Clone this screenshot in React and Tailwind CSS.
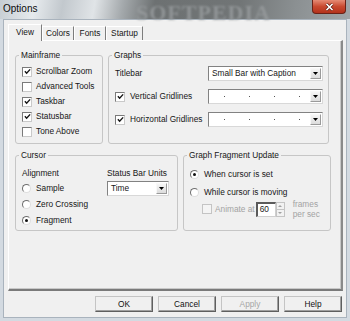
import React from "react";

function CheckBox({ checked, disabled }) {
  return (
    <span
      className={
        "flex h-[10px] w-[10px] shrink-0 items-center justify-center border " +
        (disabled
          ? "border-[#c4c4c4] bg-[#f4f4f4]"
          : "border-t-[#7a7a7a] border-l-[#7a7a7a] border-r-[#c9c9c9] border-b-[#c9c9c9] bg-white")
      }
    >
      {checked && (
        <svg viewBox="0 0 8 8" className="h-[7px] w-[7px]">
          <path d="M1 3.8 L3 6 L7 1.6" stroke="#151515" strokeWidth="1.6" fill="none" />
        </svg>
      )}
    </span>
  );
}

function Radio({ on }) {
  return (
    <span className="flex h-[9px] w-[9px] shrink-0 items-center justify-center rounded-full border border-t-[#6f6f6f] border-l-[#6f6f6f] border-r-[#dedede] border-b-[#dedede] bg-white">
      {on && <span className="h-[3px] w-[3px] rounded-full bg-[#111]" />}
    </span>
  );
}

function Arrow() {
  return (
    <span className="my-[1px] mr-[1px] flex w-[11px] items-center justify-center border border-t-[#f8f8f8] border-l-[#f8f8f8] border-r-[#9a9a9a] border-b-[#9a9a9a] bg-[linear-gradient(#f5f5f5,#dcdcdc)]">
      <svg viewBox="0 0 5 3" className="h-[3px] w-[5px]">
        <path d="M0 0 H5 L2.5 3 Z" fill="#000" />
      </svg>
    </span>
  );
}

function Dropdown({ width, children }) {
  return (
    <div
      className={
        "flex h-[15px] shrink-0 border border-t-[#828282] border-l-[#828282] border-r-[#d8d8d8] border-b-[#d8d8d8] bg-white " +
        width
      }
    >
      <div className="flex flex-1 items-center pl-[3px]">{children}</div>
      <Arrow />
    </div>
  );
}

function Dots() {
  return (
    <div className="flex items-center gap-[24px] pl-[12px]">
      <span className="h-[1px] w-[1px] bg-[#555]" />
      <span className="h-[1px] w-[1px] bg-[#555]" />
      <span className="h-[1px] w-[1px] bg-[#555]" />
      <span className="h-[1px] w-[1px] bg-[#555]" />
    </div>
  );
}

function Group({ title, className, children }) {
  return (
    <fieldset className={"shrink-0 rounded-[3px] border border-[#c6c6c6] " + className}>
      <legend className="ml-[3px] px-[2px] leading-[10px]">{title}</legend>
      {children}
    </fieldset>
  );
}

function Button({ children, disabled }) {
  return (
    <button
      className={
        "flex h-[16px] w-[58px] items-center justify-center border border-t-[#c4c4c4] border-l-[#c4c4c4] border-r-[#5f5f5f] border-b-[#5f5f5f] bg-[#f0f0f0] shadow-[inset_-1px_-1px_0_#a0a0a0] " +
        (disabled ? "text-[#a6a6a6]" : "text-[#111]")
      }
    >
      {children}
    </button>
  );
}

export default function App() {
  const mainframe = [
    ["Scrollbar Zoom", true],
    ["Advanced Tools", false],
    ["Taskbar", true],
    ["Statusbar", true],
    ["Tone Above", false],
  ];

  return (
    <div className="relative flex h-[321px] w-[350px] flex-col overflow-hidden bg-[#d3dae1] font-['Liberation_Sans',Arial,sans-serif] text-[8.3px] text-[#161616]">
      {/* Title bar */}
      <div className="relative flex h-[19px] shrink-0 items-start bg-[linear-gradient(100deg,#c6cdd3_0%,#e6eaed_10%,#c2c8cd_18%,#e0e4e7_27%,#a4a9ac_35%,#6d7172_44%,#717576_68%,#8b9092_84%,#a0a5a8_100%)]">
        <span className="pl-[3px] pt-[3px] text-[10px] leading-[12px] text-[#0c0c0c]">Options</span>
        <span className="absolute left-[136px] top-[-4px] font-['Liberation_Serif',serif] text-[22px] font-bold tracking-[1px] text-[#989c9e] opacity-80 blur-[1px]">
          SOFTPEDIA
        </span>
        <span className="relative ml-auto mr-[4px] flex h-[14px] w-[34px] items-center justify-center rounded-b-[4px] border border-t-0 border-[#6a2217] bg-[linear-gradient(#e58b75,#c94a30_50%,#b3321c)]">
          <svg viewBox="0 0 9 8" className="h-[8px] w-[9px]">
            <path d="M1.5 1 L7.5 7 M7.5 1 L1.5 7" stroke="#5a1a10" strokeWidth="3" />
            <path d="M1.5 1 L7.5 7 M7.5 1 L1.5 7" stroke="#fff" strokeWidth="1.7" />
          </svg>
        </span>
      </div>

      {/* Client area */}
      <div className="mx-[3px] flex h-[299px] shrink-0 flex-col border border-[#a9b3bd] bg-[#f0f0f0] pl-[4px] pt-[4px]">
        {/* Tabs */}
        <div className="flex h-[16px] items-end">
          <div className="relative z-10 -mb-[1px] flex h-[17px] w-[34px] items-center justify-center border border-b-0 border-t-white border-l-white border-r-[#7d7d7d] bg-[#f0f0f0] pb-[1px]">
            View
          </div>
          <div className="flex h-[14px] w-[32px] items-center justify-center border border-b-0 border-t-white border-l-white border-r-[#7d7d7d]">
            Colors
          </div>
          <div className="flex h-[14px] w-[32px] items-center justify-center border border-b-0 border-t-white border-l-white border-r-[#7d7d7d]">
            Fonts
          </div>
          <div className="flex h-[14px] w-[37px] items-center justify-center border border-b-0 border-t-white border-l-white border-r-[#7d7d7d]">
            Startup
          </div>
        </div>

        {/* Tab page */}
        <div className="flex h-[251px] w-[335px] flex-col border border-b-2 border-r-2 border-t-white border-l-white border-r-[#8a8a8a] border-b-[#7a7a7a] pl-[6px] pt-[9px] shadow-[inset_-1px_-1px_0_#c8c8c8]">
          <div className="flex gap-[5px]">
            <Group title="Mainframe" className="h-[94px] w-[88px]">
              <div className="flex flex-col pl-[6px] pt-[4px]">
                {mainframe.map(([label, on]) => (
                  <div key={label} className="flex h-[15px] items-center gap-[4px]">
                    <CheckBox checked={on} />
                    <span>{label}</span>
                  </div>
                ))}
              </div>
            </Group>

            <Group title="Graphs" className="h-[94px] w-[221px]">
              <div className="flex flex-col gap-[8px] pl-[6px] pr-[5px] pt-[6px]">
                <div className="flex h-[15px] items-center justify-between">
                  <span>Titlebar</span>
                  <Dropdown width="w-[115px]">Small Bar with Caption</Dropdown>
                </div>
                <div className="flex h-[15px] items-center justify-between">
                  <div className="flex items-center gap-[5px]">
                    <CheckBox checked />
                    <span>Vertical Gridlines</span>
                  </div>
                  <Dropdown width="w-[115px]">
                    <Dots />
                  </Dropdown>
                </div>
                <div className="flex h-[15px] items-center justify-between">
                  <div className="flex items-center gap-[5px]">
                    <CheckBox checked />
                    <span>Horizontal Gridlines</span>
                  </div>
                  <Dropdown width="w-[115px]">
                    <Dots />
                  </Dropdown>
                </div>
              </div>
            </Group>
          </div>

          <div className="mt-[6px] flex gap-[5px]">
            <Group title="Cursor" className="h-[81px] w-[163px]">
              <div className="flex pl-[6px] pt-[8px]">
                <div className="flex w-[85px] flex-col">
                  <span className="leading-[10px]">Alignment</span>
                  <div className="mt-[2px] flex flex-col">
                    <div className="flex h-[16px] items-center gap-[5px]">
                      <Radio />
                      <span>Sample</span>
                    </div>
                    <div className="flex h-[16px] items-center gap-[5px]">
                      <Radio />
                      <span>Zero Crossing</span>
                    </div>
                    <div className="flex h-[16px] items-center gap-[5px]">
                      <Radio on />
                      <span>Fragment</span>
                    </div>
                  </div>
                </div>
                <div className="flex flex-col">
                  <span className="leading-[10px]">Status Bar Units</span>
                  <div className="mt-[3px]">
                    <Dropdown width="w-[62px]">Time</Dropdown>
                  </div>
                </div>
              </div>
            </Group>

            <Group title="Graph Fragment Update" className="h-[81px] w-[148px]">
              <div className="flex flex-col pl-[6px] pt-[6px]">
                <div className="flex h-[16px] items-center gap-[5px]">
                  <Radio on />
                  <span>When cursor is set</span>
                </div>
                <div className="mt-[2px] flex h-[16px] items-center gap-[5px]">
                  <Radio />
                  <span>While cursor is moving</span>
                </div>
                <div className="flex h-[18px] items-center pl-[12px] text-[#a3a3a3]">
                  <CheckBox disabled />
                  <span className="ml-[3px]">Animate at</span>
                  <div className="ml-[1px] flex h-[15px] w-[29px]">
                    <div className="flex w-[20px] items-center border-2 border-b border-r border-t-[#5a5a5a] border-l-[#5a5a5a] border-r-[#cfcfcf] border-b-[#cfcfcf] bg-white pl-[2px] text-[#202020]">
                      60
                    </div>
                    <div className="flex w-[9px] flex-col">
                      <span className="flex flex-1 items-center justify-center border border-[#c4c4c4] bg-[#f2f2f2]">
                        <svg viewBox="0 0 4 2" className="h-[2px] w-[4px]">
                          <path d="M0 2 H4 L2 0 Z" fill="#a0a0a0" />
                        </svg>
                      </span>
                      <span className="flex flex-1 items-center justify-center border border-t-0 border-[#c4c4c4] bg-[#f2f2f2]">
                        <svg viewBox="0 0 4 2" className="h-[2px] w-[4px]">
                          <path d="M0 0 H4 L2 2 Z" fill="#a0a0a0" />
                        </svg>
                      </span>
                    </div>
                  </div>
                  <span className="ml-[8px] leading-[10px]">
                    frames
                    <br />
                    per sec
                  </span>
                </div>
              </div>
            </Group>
          </div>
        </div>

        {/* Buttons */}
        <div className="mt-[5px] flex justify-end gap-[5px] pr-[4px]">
          <Button>OK</Button>
          <Button>Cancel</Button>
          <Button disabled>Apply</Button>
          <Button>Help</Button>
        </div>
      </div>
    </div>
  );
}
